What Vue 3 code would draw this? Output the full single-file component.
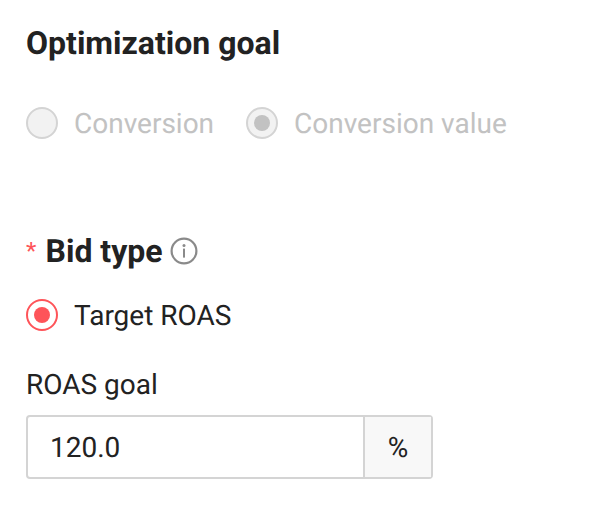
<script setup>
const goals = [
  { label: 'Conversion', checked: false },
  { label: 'Conversion value', checked: true },
]
</script>

<template>
  <div class="page">
    <h2 class="title">Optimization goal</h2>
    <div class="radios goals">
      <label v-for="g in goals" :key="g.label" class="radio disabled">
        <span class="dot" :class="{ on: g.checked }"></span>
        <span class="text">{{ g.label }}</span>
      </label>
    </div>
    <div class="bid-head">
      <span class="star">*</span>
      <h2 class="title">Bid type</h2>
      <svg class="info" width="28" height="28" viewBox="0 0 28 28" fill="none">
        <circle cx="14" cy="14" r="12.4" stroke="#8a8a8a" stroke-width="2.2" />
        <circle cx="14" cy="8.6" r="1.5" fill="#8a8a8a" />
        <rect x="13" y="11.6" width="2" height="9" fill="#8a8a8a" />
      </svg>
    </div>
    <label class="radio active">
      <span class="dot on"></span>
      <span class="text">Target ROAS</span>
    </label>
    <div class="field-label">ROAS goal</div>
    <div class="input-group">
      <div class="value">120.0</div>
      <div class="addon">%</div>
    </div>
  </div>
</template>

<style>
html, body { margin: 0; background: #fff; }
</style>

<style scoped>
.page {
  width: 614px;
  height: 528px;
  box-sizing: border-box;
  padding: 23px 26px 0;
  font-family: Roboto, "Liberation Sans", sans-serif;
  color: #222;
  overflow: hidden;
  text-rendering: geometricPrecision;
}
.title {
  margin: 0;
  font-size: 32px;
  line-height: 40px;
  font-weight: 700;
  color: #222;
}
.radios { display: flex; gap: 32px; }
.goals { margin-top: 42px; }
.radio {
  display: flex;
  align-items: center;
  gap: 16px;
  height: 36px;
  font-size: 28px;
  line-height: 36px;
}
.text { margin-top: 2px; }
.dot {
  width: 32px;
  height: 32px;
  box-sizing: border-box;
  border-radius: 50%;
  border: 2px solid #d4d4d4;
  display: flex;
  align-items: center;
  justify-content: center;
}
.dot.on::after {
  content: "";
  width: 16px;
  height: 16px;
  border-radius: 50%;
  background: #c2c2c2;
}
.disabled { color: #c2c2c2; }
.disabled .dot { background: #f2f2f2; }
.active { margin-top: 26px; }
.active .dot { border-color: #fe5459; background: #fff; }
.active .dot.on::after { background: #fe5459; }
.bid-head {
  display: flex;
  align-items: center;
  margin-top: 90px;
}
.star {
  color: #fe5459;
  font-size: 24px;
  line-height: 36px;
  width: 19.5px;
}
.info { margin-left: 7.5px; }
.field-label {
  margin-top: 34px;
  font-size: 28px;
  line-height: 36px;
}
.input-group {
  display: flex;
  width: 407px;
  height: 64px;
  box-sizing: border-box;
  margin-top: 12px;
  border: 2px solid #d4d4d4;
  border-radius: 4px;
  font-size: 28px;
}
.value {
  flex: 1;
  padding-left: 22px;
  line-height: 62px;
}
.addon {
  width: 66px;
  border-left: 2px solid #d4d4d4;
  background: #f8f8f8;
  text-align: center;
  line-height: 62px;
}
</style>
